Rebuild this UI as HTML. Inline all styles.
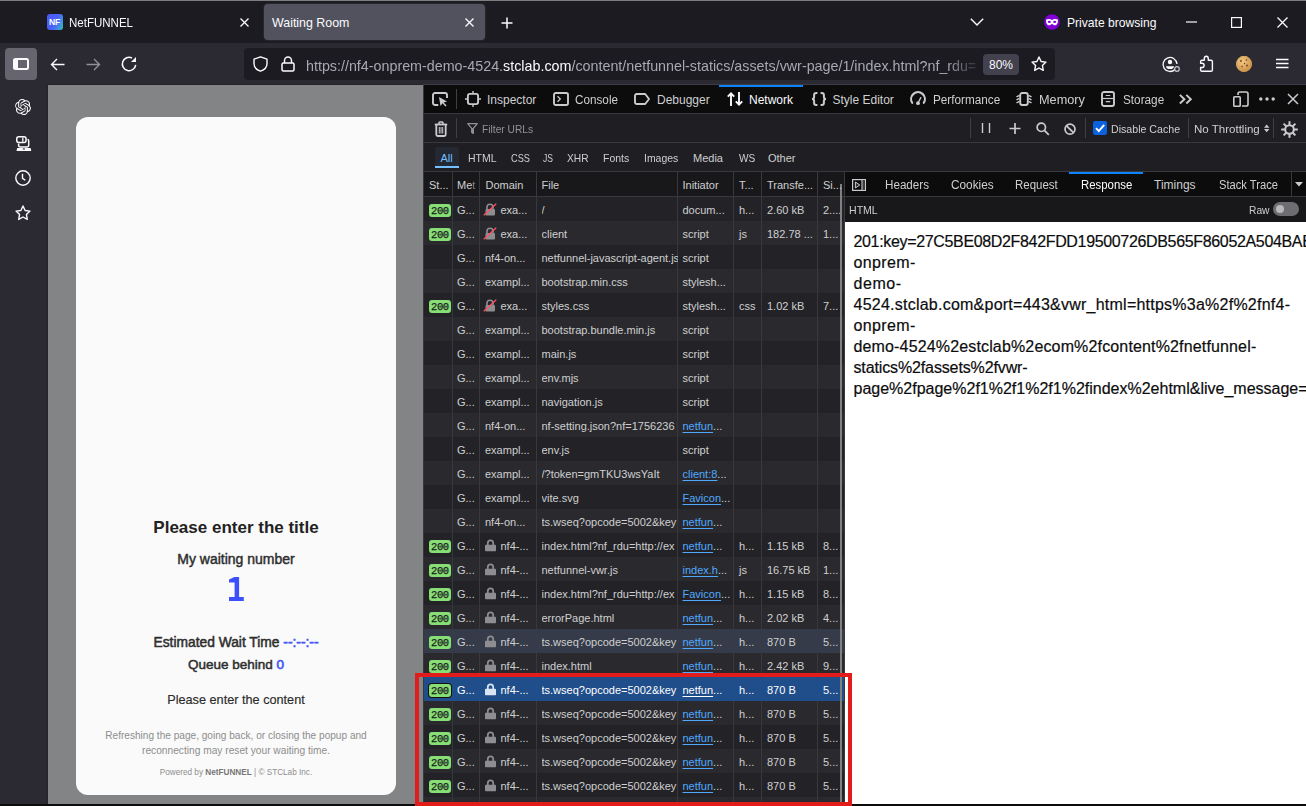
<!DOCTYPE html>
<html><head><meta charset="utf-8">
<style>
*{box-sizing:border-box;margin:0;padding:0}
html,body{width:1306px;height:806px;overflow:hidden;background:#1c1b22;font-family:"Liberation Sans",sans-serif;position:relative}
.a{position:absolute}
svg{position:absolute;overflow:visible}
.t{position:absolute;white-space:nowrap;line-height:1}
/* chrome */
#topline{left:0;top:0;width:1306px;height:1px;background:#7e7e82}
#tabstrip{left:0;top:1px;width:1306px;height:42px;background:#1c1b22}
#navbar{left:0;top:43px;width:1306px;height:41px;background:#2b2a33}
#navline{left:47px;top:84px;width:376px;height:1px;background:#24232a}
#navline2{left:423px;top:84px;width:883px;height:1px;background:#3d3c44}
#sbline{left:46px;top:85px;width:2px;height:721px;background:#27262d}
#sidebar{left:0;top:84px;width:48px;height:722px;background:#2b2a33}
#content{left:48px;top:85px;width:375px;height:719px;background:#838486}
#bottomstrip{left:0;top:804px;width:423px;height:2px;background:#0c0c0d}
#card{left:76px;top:117px;width:320px;height:678px;background:#fafafa;border-radius:12px}
.card-t{position:absolute;left:0;width:320px;text-align:center;white-space:nowrap;color:#2b2b2b}
/* devtools */
#dt{left:423px;top:85px;width:883px;height:721px;background:#232327}
#splitter{left:423px;top:85px;width:1px;height:721px;background:#38383d}
.dtt{position:absolute;white-space:nowrap;font-size:12px;line-height:1;color:#cfcfd1}
</style></head>
<body>
<div id="topline" class="a"></div>
<div id="tabstrip" class="a"></div>
<div id="navbar" class="a"></div>
<div id="navline" class="a"></div>
<div id="navline2" class="a"></div>
<div id="sidebar" class="a"></div>
<div id="content" class="a"></div>
<div id="sbline" class="a"></div>
<div id="bottomstrip" class="a"></div>

<!-- TAB STRIP -->
<div class="a" style="left:47px;top:14px;width:16px;height:16px;border-radius:3px;background:linear-gradient(115deg,#4b5af9 0%,#4b60f8 50%,#4090e6 78%,#2fd3a0 100%)"></div>
<div class="t" style="left:49px;top:17.7px;font-size:8.6px;font-weight:bold;color:#fff;letter-spacing:-0.1px">NF</div>
<div class="t" style="left:68.5px;top:16.8px;font-size:12px;color:#fbfbfe;transform:scaleX(0.96);transform-origin:0 0">NetFUNNEL</div>
<svg style="left:240px;top:18px" width="9" height="9"><path d="M0.5 0.5L8.5 8.5M8.5 0.5L0.5 8.5" stroke="#fbfbfe" stroke-width="1.3"/></svg>
<div class="a" style="left:264px;top:4px;width:221px;height:36px;border-radius:4px;background:#52525e;box-shadow:0 0 0 1px rgba(255,255,255,0.05)"></div>
<div class="t" style="left:272px;top:17px;font-size:12.4px;color:#fbfbfe">Waiting Room</div>
<svg style="left:465px;top:18px" width="9" height="9"><path d="M0.5 0.5L8.5 8.5M8.5 0.5L0.5 8.5" stroke="#fbfbfe" stroke-width="1.3"/></svg>
<svg style="left:501px;top:17px" width="12" height="12"><path d="M6 0.5V11.5M0.5 6H11.5" stroke="#fbfbfe" stroke-width="1.5"/></svg>
<svg style="left:970px;top:18px" width="14" height="8"><path d="M0.8 0.8L7 7L13.2 0.8" stroke="#fbfbfe" stroke-width="1.4" fill="none"/></svg>
<svg style="left:1044px;top:14px" width="16" height="16"><circle cx="8" cy="8" r="7.8" fill="#8000d7"/><path d="M2.1 5.5C4 4.6 6.5 4.7 8 5.9C9.5 4.7 12 4.6 13.9 5.5C14.1 8.6 13.2 11.3 11 11.3C9.7 11.3 8.7 10.4 8 9.7C7.3 10.4 6.3 11.3 5 11.3C2.8 11.3 1.9 8.6 2.1 5.5Z" fill="#fff"/><ellipse cx="5.3" cy="7.9" rx="1.5" ry="1.1" fill="#8000d7"/><ellipse cx="10.7" cy="7.9" rx="1.5" ry="1.1" fill="#8000d7"/></svg>
<div class="t" style="left:1067px;top:17px;font-size:12.1px;color:#fbfbfe">Private browsing</div>
<svg style="left:1186px;top:21px" width="11" height="2"><path d="M0 1H11" stroke="#fbfbfe" stroke-width="1.2"/></svg>
<svg style="left:1231px;top:17px" width="11" height="11"><rect x="0.6" y="0.6" width="9.8" height="9.8" stroke="#fbfbfe" stroke-width="1.2" fill="none"/></svg>
<svg style="left:1277px;top:17px" width="11" height="11"><path d="M0.5 0.5L10.5 10.5M10.5 0.5L0.5 10.5" stroke="#fbfbfe" stroke-width="1.3"/></svg>

<!-- NAV BAR -->
<div class="a" style="left:5px;top:48px;width:32px;height:32px;border-radius:4px;background:#65646f"></div>
<svg style="left:13px;top:58px" width="16" height="12"><rect x="1" y="1" width="14" height="10" rx="1.5" stroke="#fbfbfe" stroke-width="2" fill="none"/><rect x="1" y="1" width="4" height="10" fill="#fbfbfe"/></svg>
<svg style="left:50px;top:58px" width="15" height="13"><path d="M14.5 6.5H1.5M7 1L1.5 6.5L7 12" stroke="#fbfbfe" stroke-width="1.4" fill="none"/></svg>
<svg style="left:86px;top:58px" width="15" height="13"><path d="M0.5 6.5H13.5M8 1L13.5 6.5L8 12" stroke="#8f8f9d" stroke-width="1.4" fill="none"/></svg>
<svg style="left:121px;top:56px" width="16" height="16"><path d="M14.7 8.8A6.7 6.7 0 1 1 11 2" stroke="#fbfbfe" stroke-width="1.5" fill="none"/><path d="M10 5.9L15 0.9V5.9Z" fill="#fbfbfe"/></svg>
<div class="a" style="left:244px;top:48px;width:811px;height:32px;border-radius:4px;background:#1c1b22"></div>
<svg style="left:253px;top:56px" width="15" height="16"><path d="M7.5 0.8L1 3.2V7.5C1 11.2 3.8 14 7.5 15.2C11.2 14 14 11.2 14 7.5V3.2Z" stroke="#fbfbfe" stroke-width="1.4" fill="none" stroke-linejoin="round"/></svg>
<svg style="left:281px;top:56px" width="14" height="16"><path d="M3.5 7V4.5A3.5 3.5 0 0 1 10.5 4.5V7" stroke="#fbfbfe" stroke-width="1.5" fill="none"/><rect x="1" y="7" width="12" height="8" rx="1.5" stroke="#fbfbfe" stroke-width="1.5" fill="none"/></svg>
<div class="t" style="left:306px;top:58.9px;font-size:14.3px;color:#a8a8b0;width:675px;height:18px;overflow:hidden;-webkit-mask-image:linear-gradient(90deg,#000 0,#000 640px,transparent 675px)">https://nf4-onprem-demo-4524.<span style="color:#fbfbfe">stclab.com</span>/content/netfunnel-statics/assets/vwr-page/1/index.html?nf_rdu=</div>
<div class="a" style="left:983px;top:54px;width:36px;height:21px;border-radius:4px;background:#42414d"></div>
<div class="t" style="left:983px;top:59px;width:36px;text-align:center;font-size:12px;color:#fbfbfe">80%</div>
<svg style="left:1031px;top:56px" width="16" height="16"><path d="M8 1L10.1 5.5L15 6.1L11.4 9.4L12.3 14.4L8 12L3.7 14.4L4.6 9.4L1 6.1L5.9 5.5Z" stroke="#fbfbfe" stroke-width="1.4" fill="none" stroke-linejoin="round"/></svg>
<svg style="left:1162px;top:56px" width="18" height="16"><path d="M13.2 13.2A7 7 0 1 1 15 8" stroke="#fbfbfe" stroke-width="1.3" fill="none"/><circle cx="8" cy="6" r="2.2" fill="#fbfbfe"/><path d="M4 10.2H12C12 12.2 10 13 8 13C6 13 4 12.2 4 10.2Z" fill="#fbfbfe"/><circle cx="15" cy="13" r="2.3" stroke="#c8c8cc" stroke-width="1.2" fill="#2b2a33"/></svg>
<svg style="left:1199px;top:55px" width="16" height="18"><path d="M3 5.3H5.3V4C5.3 2.2 6.1 1.3 7.3 1.3C8.5 1.3 9.3 2.2 9.3 4V5.3H12C12.8 5.3 13.4 5.9 13.4 6.7V14.9C13.4 15.7 12.8 16.3 12 16.3H3C2.2 16.3 1.6 15.7 1.6 14.9V12.5H2.9C4.3 12.5 5.1 11.6 5.1 10.4C5.1 9.2 4.3 8.3 2.9 8.3H1.6V6.7C1.6 5.9 2.2 5.3 3 5.3Z" stroke="#fbfbfe" stroke-width="1.4" fill="none" stroke-linejoin="round"/></svg>
<svg style="left:1236px;top:56px" width="16" height="16"><circle cx="8" cy="8" r="7.9" fill="#e0ac62"/><circle cx="8" cy="8" r="7.9" fill="url(#ck)"/><defs><radialGradient id="ck" cx="0.4" cy="0.35" r="0.7"><stop offset="0" stop-color="#f0c987"/><stop offset="1" stop-color="#c98d3f"/></radialGradient></defs><circle cx="5" cy="5" r="0.9" fill="#7a3b1e"/><circle cx="10.5" cy="4" r="0.8" fill="#7a3b1e"/><circle cx="11" cy="9.5" r="0.9" fill="#7a3b1e"/><circle cx="6" cy="10.5" r="0.8" fill="#7a3b1e"/><circle cx="8.5" cy="7.5" r="0.7" fill="#7a3b1e"/></svg>
<svg style="left:1276px;top:58px" width="13" height="11"><path d="M0 1.5H12.5M0 5.5H12.5M0 9.5H12.5" stroke="#fbfbfe" stroke-width="1.4"/></svg>

<!-- SIDEBAR ICONS -->
<svg style="left:15px;top:99px" width="16" height="16" viewBox="0 0 24 24"><path d="M22.28 9.82a5.98 5.98 0 0 0-.52-4.91 6.05 6.05 0 0 0-6.51-2.9A6.07 6.07 0 0 0 4.98 4.18a5.98 5.98 0 0 0-4 2.9 6.05 6.05 0 0 0 .74 7.1 5.98 5.98 0 0 0 .51 4.91 6.05 6.05 0 0 0 6.52 2.9A5.98 5.98 0 0 0 13.26 24a6.06 6.06 0 0 0 5.77-4.21 5.99 5.99 0 0 0 4-2.9 6.06 6.06 0 0 0-.75-7.07zM13.26 22.43a4.48 4.48 0 0 1-2.88-1.04l.14-.08 4.78-2.76a.8.8 0 0 0 .39-.68v-6.74l2.02 1.17a.07.07 0 0 1 .04.05v5.58a4.5 4.5 0 0 1-4.49 4.5zM3.6 18.3a4.47 4.47 0 0 1-.53-3.01l.14.09 4.78 2.76a.77.77 0 0 0 .78 0l5.84-3.37v2.33a.08.08 0 0 1-.03.06L9.74 19.95a4.5 4.5 0 0 1-6.14-1.65zM2.34 7.9a4.49 4.49 0 0 1 2.37-1.97V11.6a.77.77 0 0 0 .39.68l5.81 3.35-2.02 1.17a.08.08 0 0 1-.07 0l-4.83-2.79A4.5 4.5 0 0 1 2.34 7.87zm16.6 3.86L13.1 8.36 15.12 7.2a.08.08 0 0 1 .07 0l4.83 2.79a4.49 4.49 0 0 1-.68 8.1v-5.68a.79.79 0 0 0-.41-.67zm2.01-3.02l-.14-.09-4.77-2.78a.78.78 0 0 0-.79 0L9.41 9.23V6.9a.07.07 0 0 1 .03-.06l4.83-2.79a4.5 4.5 0 0 1 6.68 4.66zM8.31 12.86l-2.02-1.16a.08.08 0 0 1-.04-.06V6.08a4.5 4.5 0 0 1 7.38-3.45l-.14.08L8.7 5.47a.8.8 0 0 0-.39.68zm1.1-2.37l2.6-1.5 2.61 1.5v3l-2.6 1.5-2.61-1.5z" fill="#fbfbfe"/></svg>
<svg style="left:16px;top:136px" width="16" height="16"><rect x="0.75" y="0.75" width="9.3" height="5.8" rx="2" stroke="#fbfbfe" stroke-width="1.5" fill="none"/><path d="M6.8 1.5V5.8" stroke="#fbfbfe" stroke-width="1.3"/><path d="M2.6 7.6V9.2C2.6 10.3 3.3 10.9 4.4 10.9H11C12.1 10.9 12.7 10.3 12.7 9.2V4.8C12.7 3.9 12.2 3.4 11.5 3.4" stroke="#fbfbfe" stroke-width="1.5" fill="none"/><path d="M1.2 12.1H14.6L15.2 14.2C15.3 14.7 15 15.1 14.5 15.1H1.3C0.8 15.1 0.5 14.7 0.6 14.2Z" fill="#fbfbfe"/><ellipse cx="7.9" cy="12.9" rx="1.3" ry="0.6" fill="#2b2a33"/></svg>
<svg style="left:15px;top:170px" width="16" height="16"><circle cx="8" cy="8" r="7.2" stroke="#fbfbfe" stroke-width="1.4" fill="none"/><path d="M7.5 3.8V8.3L10.3 10.3" stroke="#fbfbfe" stroke-width="1.4" fill="none"/></svg>
<svg style="left:15px;top:205px" width="16" height="16"><path d="M8 1L10.1 5.5L15 6.1L11.4 9.4L12.3 14.4L8 12L3.7 14.4L4.6 9.4L1 6.1L5.9 5.5Z" stroke="#fbfbfe" stroke-width="1.4" fill="none" stroke-linejoin="round"/></svg>

<div id="card" class="a">
<div class="card-t" style="top:402.3px;font-size:17px;font-weight:bold;line-height:1;color:#222">Please enter the title</div>
<div class="card-t" style="top:435px;font-size:14px;line-height:1;color:#2e2e2e;-webkit-text-stroke:0.45px #2e2e2e">My waiting number</div>
<svg style="left:152px;top:459px" width="17" height="26"><path d="M1 3.5L6.4 0.9H11.1V20.9H15.8V24.9H1V20.9H6.6V6.4H1Z" fill="#3c50fb"/></svg>
<div class="card-t" style="top:519px;font-size:13.8px;line-height:1;color:#2e2e2e;-webkit-text-stroke:0.5px #2e2e2e">Estimated Wait Time <span style="color:#4255f5;-webkit-text-stroke:0.6px #4255f5">--:--:--</span></div>
<div class="card-t" style="top:541px;font-size:13.5px;line-height:1;color:#2e2e2e;-webkit-text-stroke:0.5px #2e2e2e">Queue behind <span style="color:#4255f5;-webkit-text-stroke:0.6px #4255f5">0</span></div>
<div class="card-t" style="top:577px;font-size:12.7px;line-height:1;color:#2b2b2b;-webkit-text-stroke:0.15px #2b2b2b">Please enter the content</div>
<div class="card-t" style="top:613.6px;font-size:10.1px;line-height:1;color:#8d8d8d">Refreshing the page, going back, or closing the popup and</div>
<div class="card-t" style="top:628.6px;font-size:10.2px;line-height:1;color:#8d8d8d">reconnecting may reset your waiting time.</div>
<div class="card-t" style="top:651.5px;font-size:8.2px;line-height:1;color:#8d8d8d">Powered by <b style="color:#777">NetFUNNEL</b> | © STCLab Inc.</div>
</div>
<div id="dt" class="a"></div>
<div id="splitter" class="a"></div>
<div class="a" style="left:424px;top:85px;width:882px;height:28px;background:#0c0c0d;"></div>
<div class="a" style="left:424px;top:113px;width:882px;height:1px;background:#38383d;"></div>
<div class="a" style="left:424px;top:114px;width:882px;height:28px;background:#1f1f23;"></div>
<div class="a" style="left:424px;top:142px;width:882px;height:1px;background:#38383d;"></div>
<div class="a" style="left:424px;top:143px;width:882px;height:28px;background:#1f1f23;"></div>
<div class="a" style="left:424px;top:171px;width:882px;height:1px;background:#38383d;"></div>
<div class="a" style="left:424px;top:172px;width:420px;height:24px;background:#18181a;"></div>
<div class="a" style="left:424px;top:196px;width:420px;height:1px;background:#38383d;"></div>
<div class="a" style="left:424px;top:197px;width:420px;height:24px;background:#232327;"></div>
<div class="a" style="left:424px;top:221px;width:420px;height:24px;background:#2a2a2e;"></div>
<div class="a" style="left:424px;top:245px;width:420px;height:24px;background:#232327;"></div>
<div class="a" style="left:424px;top:269px;width:420px;height:24px;background:#2a2a2e;"></div>
<div class="a" style="left:424px;top:293px;width:420px;height:24px;background:#232327;"></div>
<div class="a" style="left:424px;top:317px;width:420px;height:24px;background:#2a2a2e;"></div>
<div class="a" style="left:424px;top:341px;width:420px;height:24px;background:#232327;"></div>
<div class="a" style="left:424px;top:365px;width:420px;height:24px;background:#2a2a2e;"></div>
<div class="a" style="left:424px;top:389px;width:420px;height:24px;background:#232327;"></div>
<div class="a" style="left:424px;top:413px;width:420px;height:24px;background:#2a2a2e;"></div>
<div class="a" style="left:424px;top:437px;width:420px;height:24px;background:#232327;"></div>
<div class="a" style="left:424px;top:461px;width:420px;height:24px;background:#2a2a2e;"></div>
<div class="a" style="left:424px;top:485px;width:420px;height:24px;background:#232327;"></div>
<div class="a" style="left:424px;top:509px;width:420px;height:24px;background:#2a2a2e;"></div>
<div class="a" style="left:424px;top:533px;width:420px;height:24px;background:#232327;"></div>
<div class="a" style="left:424px;top:557px;width:420px;height:24px;background:#2a2a2e;"></div>
<div class="a" style="left:424px;top:581px;width:420px;height:24px;background:#232327;"></div>
<div class="a" style="left:424px;top:605px;width:420px;height:24px;background:#2a2a2e;"></div>
<div class="a" style="left:424px;top:653px;width:420px;height:24px;background:#2a2a2e;"></div>
<div class="a" style="left:424px;top:701px;width:420px;height:24px;background:#2a2a2e;"></div>
<div class="a" style="left:424px;top:725px;width:420px;height:24px;background:#232327;"></div>
<div class="a" style="left:424px;top:749px;width:420px;height:24px;background:#2a2a2e;"></div>
<div class="a" style="left:424px;top:773px;width:420px;height:24px;background:#232327;"></div>
<div class="a" style="left:424px;top:797px;width:420px;height:9px;background:#2a2a2e;"></div>
<div class="a" style="left:452px;top:172px;width:1px;height:634px;background:#38383d;"></div>
<div class="a" style="left:479px;top:172px;width:1px;height:634px;background:#38383d;"></div>
<div class="a" style="left:536px;top:172px;width:1px;height:634px;background:#38383d;"></div>
<div class="a" style="left:677px;top:172px;width:1px;height:634px;background:#38383d;"></div>
<div class="a" style="left:733px;top:172px;width:1px;height:634px;background:#38383d;"></div>
<div class="a" style="left:761px;top:172px;width:1px;height:634px;background:#38383d;"></div>
<div class="a" style="left:817px;top:172px;width:1px;height:634px;background:#38383d;"></div>
<div class="a" style="left:424px;top:629px;width:420px;height:24px;background:#353b48;"></div>
<div class="a" style="left:424px;top:677px;width:420px;height:24px;background:#204e8a;"></div>
<div class="a" style="left:429px;top:204px;width:22px;height:13px;border-radius:3px;background:#86de74;"></div>
<div class="t" style="left:431px;top:205.61px;font-size:10.5px;color:#1a1a1d;font-family:'Liberation Mono',monospace;letter-spacing:-0.4px;-webkit-text-stroke:0.25px #1a1a1d">200</div>
<div class="t" style="left:457px;top:205.29px;font-size:11px;color:#cfcfd1;">G...</div>
<svg style="left:483px;top:203px" width="14" height="13"><path d="M4 6V4.3A3 3 0 0 1 10 4.3V6" stroke="#8e8e92" stroke-width="1.6" fill="none"/><rect x="2.5" y="6" width="9.5" height="6.5" rx="1" fill="#8e8e92"/><path d="M0.8 12.2L13.2 0.8" stroke="#ff4f5e" stroke-width="1.4"/></svg>
<div class="t" style="left:500.5px;top:205.29px;font-size:11px;color:#cfcfd1;">exa...</div>
<div class="t" style="left:541.5px;top:205.29px;font-size:11px;color:#cfcfd1;width:136px;overflow:hidden;height:14px;">/</div>
<div class="t" style="left:682.5px;top:205.29px;font-size:11px;color:#cfcfd1;">docum...</div>
<div class="t" style="left:739px;top:205.29px;font-size:11px;color:#cfcfd1;">h...</div>
<div class="t" style="left:767px;top:205.29px;font-size:11px;color:#cfcfd1;">2.60 kB</div>
<div class="t" style="left:823px;top:205.29px;font-size:11px;color:#cfcfd1;">2....</div>
<div class="a" style="left:429px;top:228px;width:22px;height:13px;border-radius:3px;background:#86de74;"></div>
<div class="t" style="left:431px;top:229.61px;font-size:10.5px;color:#1a1a1d;font-family:'Liberation Mono',monospace;letter-spacing:-0.4px;-webkit-text-stroke:0.25px #1a1a1d">200</div>
<div class="t" style="left:457px;top:229.29px;font-size:11px;color:#cfcfd1;">G...</div>
<svg style="left:483px;top:227px" width="14" height="13"><path d="M4 6V4.3A3 3 0 0 1 10 4.3V6" stroke="#8e8e92" stroke-width="1.6" fill="none"/><rect x="2.5" y="6" width="9.5" height="6.5" rx="1" fill="#8e8e92"/><path d="M0.8 12.2L13.2 0.8" stroke="#ff4f5e" stroke-width="1.4"/></svg>
<div class="t" style="left:500.5px;top:229.29px;font-size:11px;color:#cfcfd1;">exa...</div>
<div class="t" style="left:541.5px;top:229.29px;font-size:11px;color:#cfcfd1;width:136px;overflow:hidden;height:14px;">client</div>
<div class="t" style="left:682.5px;top:229.29px;font-size:11px;color:#cfcfd1;">script</div>
<div class="t" style="left:739px;top:229.29px;font-size:11px;color:#cfcfd1;">js</div>
<div class="t" style="left:767px;top:229.29px;font-size:11px;color:#cfcfd1;">182.78 ...</div>
<div class="t" style="left:823px;top:229.29px;font-size:11px;color:#cfcfd1;">1...</div>
<div class="t" style="left:457px;top:253.29px;font-size:11px;color:#cfcfd1;">G...</div>
<div class="t" style="left:485px;top:253.29px;font-size:11px;color:#cfcfd1;">nf4-on...</div>
<div class="t" style="left:541.5px;top:253.29px;font-size:11px;color:#cfcfd1;width:136px;overflow:hidden;height:14px;">netfunnel-javascript-agent.js</div>
<div class="t" style="left:682.5px;top:253.29px;font-size:11px;color:#cfcfd1;">script</div>
<div class="t" style="left:457px;top:277.29px;font-size:11px;color:#cfcfd1;">G...</div>
<div class="t" style="left:485px;top:277.29px;font-size:11px;color:#cfcfd1;">exampl...</div>
<div class="t" style="left:541.5px;top:277.29px;font-size:11px;color:#cfcfd1;width:136px;overflow:hidden;height:14px;">bootstrap.min.css</div>
<div class="t" style="left:682.5px;top:277.29px;font-size:11px;color:#cfcfd1;">stylesh...</div>
<div class="a" style="left:429px;top:300px;width:22px;height:13px;border-radius:3px;background:#86de74;"></div>
<div class="t" style="left:431px;top:301.61px;font-size:10.5px;color:#1a1a1d;font-family:'Liberation Mono',monospace;letter-spacing:-0.4px;-webkit-text-stroke:0.25px #1a1a1d">200</div>
<div class="t" style="left:457px;top:301.29px;font-size:11px;color:#cfcfd1;">G...</div>
<svg style="left:483px;top:299px" width="14" height="13"><path d="M4 6V4.3A3 3 0 0 1 10 4.3V6" stroke="#8e8e92" stroke-width="1.6" fill="none"/><rect x="2.5" y="6" width="9.5" height="6.5" rx="1" fill="#8e8e92"/><path d="M0.8 12.2L13.2 0.8" stroke="#ff4f5e" stroke-width="1.4"/></svg>
<div class="t" style="left:500.5px;top:301.29px;font-size:11px;color:#cfcfd1;">exa...</div>
<div class="t" style="left:541.5px;top:301.29px;font-size:11px;color:#cfcfd1;width:136px;overflow:hidden;height:14px;">styles.css</div>
<div class="t" style="left:682.5px;top:301.29px;font-size:11px;color:#cfcfd1;">stylesh...</div>
<div class="t" style="left:739px;top:301.29px;font-size:11px;color:#cfcfd1;">css</div>
<div class="t" style="left:767px;top:301.29px;font-size:11px;color:#cfcfd1;">1.02 kB</div>
<div class="t" style="left:823px;top:301.29px;font-size:11px;color:#cfcfd1;">7...</div>
<div class="t" style="left:457px;top:325.29px;font-size:11px;color:#cfcfd1;">G...</div>
<div class="t" style="left:485px;top:325.29px;font-size:11px;color:#cfcfd1;">exampl...</div>
<div class="t" style="left:541.5px;top:325.29px;font-size:11px;color:#cfcfd1;width:136px;overflow:hidden;height:14px;">bootstrap.bundle.min.js</div>
<div class="t" style="left:682.5px;top:325.29px;font-size:11px;color:#cfcfd1;">script</div>
<div class="t" style="left:457px;top:349.29px;font-size:11px;color:#cfcfd1;">G...</div>
<div class="t" style="left:485px;top:349.29px;font-size:11px;color:#cfcfd1;">exampl...</div>
<div class="t" style="left:541.5px;top:349.29px;font-size:11px;color:#cfcfd1;width:136px;overflow:hidden;height:14px;">main.js</div>
<div class="t" style="left:682.5px;top:349.29px;font-size:11px;color:#cfcfd1;">script</div>
<div class="t" style="left:457px;top:373.29px;font-size:11px;color:#cfcfd1;">G...</div>
<div class="t" style="left:485px;top:373.29px;font-size:11px;color:#cfcfd1;">exampl...</div>
<div class="t" style="left:541.5px;top:373.29px;font-size:11px;color:#cfcfd1;width:136px;overflow:hidden;height:14px;">env.mjs</div>
<div class="t" style="left:682.5px;top:373.29px;font-size:11px;color:#cfcfd1;">script</div>
<div class="t" style="left:457px;top:397.29px;font-size:11px;color:#cfcfd1;">G...</div>
<div class="t" style="left:485px;top:397.29px;font-size:11px;color:#cfcfd1;">exampl...</div>
<div class="t" style="left:541.5px;top:397.29px;font-size:11px;color:#cfcfd1;width:136px;overflow:hidden;height:14px;">navigation.js</div>
<div class="t" style="left:682.5px;top:397.29px;font-size:11px;color:#cfcfd1;">script</div>
<div class="t" style="left:457px;top:421.29px;font-size:11px;color:#cfcfd1;">G...</div>
<div class="t" style="left:485px;top:421.29px;font-size:11px;color:#cfcfd1;">nf4-on...</div>
<div class="t" style="left:541.5px;top:421.29px;font-size:11px;color:#cfcfd1;width:136px;overflow:hidden;height:14px;">nf-setting.json?nf=1756236</div>
<div class="t" style="left:682.5px;top:421.29px;font-size:11px;color:#cfcfd1;"><span style="text-decoration:underline;text-underline-offset:1.5px;color:#4fa9ff">netfun</span>...</div>
<div class="t" style="left:457px;top:445.29px;font-size:11px;color:#cfcfd1;">G...</div>
<div class="t" style="left:485px;top:445.29px;font-size:11px;color:#cfcfd1;">exampl...</div>
<div class="t" style="left:541.5px;top:445.29px;font-size:11px;color:#cfcfd1;width:136px;overflow:hidden;height:14px;">env.js</div>
<div class="t" style="left:682.5px;top:445.29px;font-size:11px;color:#cfcfd1;">script</div>
<div class="t" style="left:457px;top:469.29px;font-size:11px;color:#cfcfd1;">G...</div>
<div class="t" style="left:485px;top:469.29px;font-size:11px;color:#cfcfd1;">exampl...</div>
<div class="t" style="left:541.5px;top:469.29px;font-size:11px;color:#cfcfd1;width:136px;overflow:hidden;height:14px;">/?token=gmTKU3wsYaIt</div>
<div class="t" style="left:682.5px;top:469.29px;font-size:11px;color:#cfcfd1;"><span style="text-decoration:underline;text-underline-offset:1.5px;color:#4fa9ff">client:8</span>...</div>
<div class="t" style="left:457px;top:493.29px;font-size:11px;color:#cfcfd1;">G...</div>
<div class="t" style="left:485px;top:493.29px;font-size:11px;color:#cfcfd1;">exampl...</div>
<div class="t" style="left:541.5px;top:493.29px;font-size:11px;color:#cfcfd1;width:136px;overflow:hidden;height:14px;">vite.svg</div>
<div class="t" style="left:682.5px;top:493.29px;font-size:11px;color:#cfcfd1;"><span style="text-decoration:underline;text-underline-offset:1.5px;color:#4fa9ff">Favicon</span>...</div>
<div class="t" style="left:457px;top:517.29px;font-size:11px;color:#cfcfd1;">G...</div>
<div class="t" style="left:485px;top:517.29px;font-size:11px;color:#cfcfd1;">nf4-on...</div>
<div class="t" style="left:541.5px;top:517.29px;font-size:11px;color:#cfcfd1;width:136px;overflow:hidden;height:14px;">ts.wseq?opcode=5002&amp;key</div>
<div class="t" style="left:682.5px;top:517.29px;font-size:11px;color:#cfcfd1;"><span style="text-decoration:underline;text-underline-offset:1.5px;color:#4fa9ff">netfun</span>...</div>
<div class="a" style="left:429px;top:540px;width:22px;height:13px;border-radius:3px;background:#86de74;"></div>
<div class="t" style="left:431px;top:541.61px;font-size:10.5px;color:#1a1a1d;font-family:'Liberation Mono',monospace;letter-spacing:-0.4px;-webkit-text-stroke:0.25px #1a1a1d">200</div>
<div class="t" style="left:457px;top:541.29px;font-size:11px;color:#cfcfd1;">G...</div>
<svg style="left:485px;top:539px" width="11" height="13"><path d="M2.8 6V4A2.7 2.7 0 0 1 8.2 4V6" stroke="#8e8e92" stroke-width="1.7" fill="none"/><rect x="0" y="5.8" width="11" height="6.4" rx="0.8" fill="#8e8e92"/></svg>
<div class="t" style="left:500.5px;top:541.29px;font-size:11px;color:#cfcfd1;">nf4-...</div>
<div class="t" style="left:541.5px;top:541.29px;font-size:11px;color:#cfcfd1;width:136px;overflow:hidden;height:14px;">index.html?nf_rdu=http://ex</div>
<div class="t" style="left:682.5px;top:541.29px;font-size:11px;color:#cfcfd1;"><span style="text-decoration:underline;text-underline-offset:1.5px;color:#4fa9ff">netfun</span>...</div>
<div class="t" style="left:739px;top:541.29px;font-size:11px;color:#cfcfd1;">h...</div>
<div class="t" style="left:767px;top:541.29px;font-size:11px;color:#cfcfd1;">1.15 kB</div>
<div class="t" style="left:823px;top:541.29px;font-size:11px;color:#cfcfd1;">8...</div>
<div class="a" style="left:429px;top:564px;width:22px;height:13px;border-radius:3px;background:#86de74;"></div>
<div class="t" style="left:431px;top:565.61px;font-size:10.5px;color:#1a1a1d;font-family:'Liberation Mono',monospace;letter-spacing:-0.4px;-webkit-text-stroke:0.25px #1a1a1d">200</div>
<div class="t" style="left:457px;top:565.29px;font-size:11px;color:#cfcfd1;">G...</div>
<svg style="left:485px;top:563px" width="11" height="13"><path d="M2.8 6V4A2.7 2.7 0 0 1 8.2 4V6" stroke="#8e8e92" stroke-width="1.7" fill="none"/><rect x="0" y="5.8" width="11" height="6.4" rx="0.8" fill="#8e8e92"/></svg>
<div class="t" style="left:500.5px;top:565.29px;font-size:11px;color:#cfcfd1;">nf4-...</div>
<div class="t" style="left:541.5px;top:565.29px;font-size:11px;color:#cfcfd1;width:136px;overflow:hidden;height:14px;">netfunnel-vwr.js</div>
<div class="t" style="left:682.5px;top:565.29px;font-size:11px;color:#cfcfd1;"><span style="text-decoration:underline;text-underline-offset:1.5px;color:#4fa9ff">index.h</span>...</div>
<div class="t" style="left:739px;top:565.29px;font-size:11px;color:#cfcfd1;">js</div>
<div class="t" style="left:767px;top:565.29px;font-size:11px;color:#cfcfd1;">16.75 kB</div>
<div class="t" style="left:823px;top:565.29px;font-size:11px;color:#cfcfd1;">1...</div>
<div class="a" style="left:429px;top:588px;width:22px;height:13px;border-radius:3px;background:#86de74;"></div>
<div class="t" style="left:431px;top:589.61px;font-size:10.5px;color:#1a1a1d;font-family:'Liberation Mono',monospace;letter-spacing:-0.4px;-webkit-text-stroke:0.25px #1a1a1d">200</div>
<div class="t" style="left:457px;top:589.29px;font-size:11px;color:#cfcfd1;">G...</div>
<svg style="left:485px;top:587px" width="11" height="13"><path d="M2.8 6V4A2.7 2.7 0 0 1 8.2 4V6" stroke="#8e8e92" stroke-width="1.7" fill="none"/><rect x="0" y="5.8" width="11" height="6.4" rx="0.8" fill="#8e8e92"/></svg>
<div class="t" style="left:500.5px;top:589.29px;font-size:11px;color:#cfcfd1;">nf4-...</div>
<div class="t" style="left:541.5px;top:589.29px;font-size:11px;color:#cfcfd1;width:136px;overflow:hidden;height:14px;">index.html?nf_rdu=http://ex</div>
<div class="t" style="left:682.5px;top:589.29px;font-size:11px;color:#cfcfd1;"><span style="text-decoration:underline;text-underline-offset:1.5px;color:#4fa9ff">Favicon</span>...</div>
<div class="t" style="left:739px;top:589.29px;font-size:11px;color:#cfcfd1;">h...</div>
<div class="t" style="left:767px;top:589.29px;font-size:11px;color:#cfcfd1;">1.15 kB</div>
<div class="t" style="left:823px;top:589.29px;font-size:11px;color:#cfcfd1;">8...</div>
<div class="a" style="left:429px;top:612px;width:22px;height:13px;border-radius:3px;background:#86de74;"></div>
<div class="t" style="left:431px;top:613.61px;font-size:10.5px;color:#1a1a1d;font-family:'Liberation Mono',monospace;letter-spacing:-0.4px;-webkit-text-stroke:0.25px #1a1a1d">200</div>
<div class="t" style="left:457px;top:613.29px;font-size:11px;color:#cfcfd1;">G...</div>
<svg style="left:485px;top:611px" width="11" height="13"><path d="M2.8 6V4A2.7 2.7 0 0 1 8.2 4V6" stroke="#8e8e92" stroke-width="1.7" fill="none"/><rect x="0" y="5.8" width="11" height="6.4" rx="0.8" fill="#8e8e92"/></svg>
<div class="t" style="left:500.5px;top:613.29px;font-size:11px;color:#cfcfd1;">nf4-...</div>
<div class="t" style="left:541.5px;top:613.29px;font-size:11px;color:#cfcfd1;width:136px;overflow:hidden;height:14px;">errorPage.html</div>
<div class="t" style="left:682.5px;top:613.29px;font-size:11px;color:#cfcfd1;"><span style="text-decoration:underline;text-underline-offset:1.5px;color:#4fa9ff">netfun</span>...</div>
<div class="t" style="left:739px;top:613.29px;font-size:11px;color:#cfcfd1;">h...</div>
<div class="t" style="left:767px;top:613.29px;font-size:11px;color:#cfcfd1;">2.02 kB</div>
<div class="t" style="left:823px;top:613.29px;font-size:11px;color:#cfcfd1;">4...</div>
<div class="a" style="left:429px;top:636px;width:22px;height:13px;border-radius:3px;background:#86de74;"></div>
<div class="t" style="left:431px;top:637.61px;font-size:10.5px;color:#1a1a1d;font-family:'Liberation Mono',monospace;letter-spacing:-0.4px;-webkit-text-stroke:0.25px #1a1a1d">200</div>
<div class="t" style="left:457px;top:637.29px;font-size:11px;color:#cfcfd1;">G...</div>
<svg style="left:485px;top:635px" width="11" height="13"><path d="M2.8 6V4A2.7 2.7 0 0 1 8.2 4V6" stroke="#8e8e92" stroke-width="1.7" fill="none"/><rect x="0" y="5.8" width="11" height="6.4" rx="0.8" fill="#8e8e92"/></svg>
<div class="t" style="left:500.5px;top:637.29px;font-size:11px;color:#cfcfd1;">nf4-...</div>
<div class="t" style="left:541.5px;top:637.29px;font-size:11px;color:#cfcfd1;width:136px;overflow:hidden;height:14px;">ts.wseq?opcode=5002&amp;key</div>
<div class="t" style="left:682.5px;top:637.29px;font-size:11px;color:#cfcfd1;"><span style="text-decoration:underline;text-underline-offset:1.5px;color:#4fa9ff">netfun</span>...</div>
<div class="t" style="left:739px;top:637.29px;font-size:11px;color:#cfcfd1;">h...</div>
<div class="t" style="left:767px;top:637.29px;font-size:11px;color:#cfcfd1;">870 B</div>
<div class="t" style="left:823px;top:637.29px;font-size:11px;color:#cfcfd1;">5...</div>
<div class="a" style="left:429px;top:660px;width:22px;height:13px;border-radius:3px;background:#86de74;"></div>
<div class="t" style="left:431px;top:661.61px;font-size:10.5px;color:#1a1a1d;font-family:'Liberation Mono',monospace;letter-spacing:-0.4px;-webkit-text-stroke:0.25px #1a1a1d">200</div>
<div class="t" style="left:457px;top:661.29px;font-size:11px;color:#cfcfd1;">G...</div>
<svg style="left:485px;top:659px" width="11" height="13"><path d="M2.8 6V4A2.7 2.7 0 0 1 8.2 4V6" stroke="#8e8e92" stroke-width="1.7" fill="none"/><rect x="0" y="5.8" width="11" height="6.4" rx="0.8" fill="#8e8e92"/></svg>
<div class="t" style="left:500.5px;top:661.29px;font-size:11px;color:#cfcfd1;">nf4-...</div>
<div class="t" style="left:541.5px;top:661.29px;font-size:11px;color:#cfcfd1;width:136px;overflow:hidden;height:14px;">index.html</div>
<div class="t" style="left:682.5px;top:661.29px;font-size:11px;color:#cfcfd1;"><span style="text-decoration:underline;text-underline-offset:1.5px;color:#4fa9ff">netfun</span>...</div>
<div class="t" style="left:739px;top:661.29px;font-size:11px;color:#cfcfd1;">h...</div>
<div class="t" style="left:767px;top:661.29px;font-size:11px;color:#cfcfd1;">2.42 kB</div>
<div class="t" style="left:823px;top:661.29px;font-size:11px;color:#cfcfd1;">9...</div>
<div class="a" style="left:429px;top:684px;width:22px;height:13px;border-radius:3px;background:#86de74;box-shadow:0 0 0 1px #111;"></div>
<div class="t" style="left:431px;top:685.61px;font-size:10.5px;color:#1a1a1d;font-family:'Liberation Mono',monospace;letter-spacing:-0.4px;-webkit-text-stroke:0.25px #1a1a1d">200</div>
<div class="t" style="left:457px;top:685.29px;font-size:11px;color:#ffffff;">G...</div>
<svg style="left:485px;top:683px" width="11" height="13"><path d="M2.8 6V4A2.7 2.7 0 0 1 8.2 4V6" stroke="#d8e3f3" stroke-width="1.7" fill="none"/><rect x="0" y="5.8" width="11" height="6.4" rx="0.8" fill="#d8e3f3"/></svg>
<div class="t" style="left:500.5px;top:685.29px;font-size:11px;color:#ffffff;">nf4-...</div>
<div class="t" style="left:541.5px;top:685.29px;font-size:11px;color:#ffffff;width:136px;overflow:hidden;height:14px;">ts.wseq?opcode=5002&amp;key</div>
<div class="t" style="left:682.5px;top:685.29px;font-size:11px;color:#ffffff;"><span style="text-decoration:underline;text-underline-offset:1.5px;color:#ffffff">netfun</span>...</div>
<div class="t" style="left:739px;top:685.29px;font-size:11px;color:#ffffff;">h...</div>
<div class="t" style="left:767px;top:685.29px;font-size:11px;color:#ffffff;">870 B</div>
<div class="t" style="left:823px;top:685.29px;font-size:11px;color:#ffffff;">5...</div>
<div class="a" style="left:429px;top:708px;width:22px;height:13px;border-radius:3px;background:#86de74;"></div>
<div class="t" style="left:431px;top:709.61px;font-size:10.5px;color:#1a1a1d;font-family:'Liberation Mono',monospace;letter-spacing:-0.4px;-webkit-text-stroke:0.25px #1a1a1d">200</div>
<div class="t" style="left:457px;top:709.29px;font-size:11px;color:#cfcfd1;">G...</div>
<svg style="left:485px;top:707px" width="11" height="13"><path d="M2.8 6V4A2.7 2.7 0 0 1 8.2 4V6" stroke="#8e8e92" stroke-width="1.7" fill="none"/><rect x="0" y="5.8" width="11" height="6.4" rx="0.8" fill="#8e8e92"/></svg>
<div class="t" style="left:500.5px;top:709.29px;font-size:11px;color:#cfcfd1;">nf4-...</div>
<div class="t" style="left:541.5px;top:709.29px;font-size:11px;color:#cfcfd1;width:136px;overflow:hidden;height:14px;">ts.wseq?opcode=5002&amp;key</div>
<div class="t" style="left:682.5px;top:709.29px;font-size:11px;color:#cfcfd1;"><span style="text-decoration:underline;text-underline-offset:1.5px;color:#4fa9ff">netfun</span>...</div>
<div class="t" style="left:739px;top:709.29px;font-size:11px;color:#cfcfd1;">h...</div>
<div class="t" style="left:767px;top:709.29px;font-size:11px;color:#cfcfd1;">870 B</div>
<div class="t" style="left:823px;top:709.29px;font-size:11px;color:#cfcfd1;">5...</div>
<div class="a" style="left:429px;top:732px;width:22px;height:13px;border-radius:3px;background:#86de74;"></div>
<div class="t" style="left:431px;top:733.61px;font-size:10.5px;color:#1a1a1d;font-family:'Liberation Mono',monospace;letter-spacing:-0.4px;-webkit-text-stroke:0.25px #1a1a1d">200</div>
<div class="t" style="left:457px;top:733.29px;font-size:11px;color:#cfcfd1;">G...</div>
<svg style="left:485px;top:731px" width="11" height="13"><path d="M2.8 6V4A2.7 2.7 0 0 1 8.2 4V6" stroke="#8e8e92" stroke-width="1.7" fill="none"/><rect x="0" y="5.8" width="11" height="6.4" rx="0.8" fill="#8e8e92"/></svg>
<div class="t" style="left:500.5px;top:733.29px;font-size:11px;color:#cfcfd1;">nf4-...</div>
<div class="t" style="left:541.5px;top:733.29px;font-size:11px;color:#cfcfd1;width:136px;overflow:hidden;height:14px;">ts.wseq?opcode=5002&amp;key</div>
<div class="t" style="left:682.5px;top:733.29px;font-size:11px;color:#cfcfd1;"><span style="text-decoration:underline;text-underline-offset:1.5px;color:#4fa9ff">netfun</span>...</div>
<div class="t" style="left:739px;top:733.29px;font-size:11px;color:#cfcfd1;">h...</div>
<div class="t" style="left:767px;top:733.29px;font-size:11px;color:#cfcfd1;">870 B</div>
<div class="t" style="left:823px;top:733.29px;font-size:11px;color:#cfcfd1;">5...</div>
<div class="a" style="left:429px;top:756px;width:22px;height:13px;border-radius:3px;background:#86de74;"></div>
<div class="t" style="left:431px;top:757.61px;font-size:10.5px;color:#1a1a1d;font-family:'Liberation Mono',monospace;letter-spacing:-0.4px;-webkit-text-stroke:0.25px #1a1a1d">200</div>
<div class="t" style="left:457px;top:757.29px;font-size:11px;color:#cfcfd1;">G...</div>
<svg style="left:485px;top:755px" width="11" height="13"><path d="M2.8 6V4A2.7 2.7 0 0 1 8.2 4V6" stroke="#8e8e92" stroke-width="1.7" fill="none"/><rect x="0" y="5.8" width="11" height="6.4" rx="0.8" fill="#8e8e92"/></svg>
<div class="t" style="left:500.5px;top:757.29px;font-size:11px;color:#cfcfd1;">nf4-...</div>
<div class="t" style="left:541.5px;top:757.29px;font-size:11px;color:#cfcfd1;width:136px;overflow:hidden;height:14px;">ts.wseq?opcode=5002&amp;key</div>
<div class="t" style="left:682.5px;top:757.29px;font-size:11px;color:#cfcfd1;"><span style="text-decoration:underline;text-underline-offset:1.5px;color:#4fa9ff">netfun</span>...</div>
<div class="t" style="left:739px;top:757.29px;font-size:11px;color:#cfcfd1;">h...</div>
<div class="t" style="left:767px;top:757.29px;font-size:11px;color:#cfcfd1;">870 B</div>
<div class="t" style="left:823px;top:757.29px;font-size:11px;color:#cfcfd1;">5...</div>
<div class="a" style="left:429px;top:780px;width:22px;height:13px;border-radius:3px;background:#86de74;"></div>
<div class="t" style="left:431px;top:781.61px;font-size:10.5px;color:#1a1a1d;font-family:'Liberation Mono',monospace;letter-spacing:-0.4px;-webkit-text-stroke:0.25px #1a1a1d">200</div>
<div class="t" style="left:457px;top:781.29px;font-size:11px;color:#cfcfd1;">G...</div>
<svg style="left:485px;top:779px" width="11" height="13"><path d="M2.8 6V4A2.7 2.7 0 0 1 8.2 4V6" stroke="#8e8e92" stroke-width="1.7" fill="none"/><rect x="0" y="5.8" width="11" height="6.4" rx="0.8" fill="#8e8e92"/></svg>
<div class="t" style="left:500.5px;top:781.29px;font-size:11px;color:#cfcfd1;">nf4-...</div>
<div class="t" style="left:541.5px;top:781.29px;font-size:11px;color:#cfcfd1;width:136px;overflow:hidden;height:14px;">ts.wseq?opcode=5002&amp;key</div>
<div class="t" style="left:682.5px;top:781.29px;font-size:11px;color:#cfcfd1;"><span style="text-decoration:underline;text-underline-offset:1.5px;color:#4fa9ff">netfun</span>...</div>
<div class="t" style="left:739px;top:781.29px;font-size:11px;color:#cfcfd1;">h...</div>
<div class="t" style="left:767px;top:781.29px;font-size:11px;color:#cfcfd1;">870 B</div>
<div class="t" style="left:823px;top:781.29px;font-size:11px;color:#cfcfd1;">5...</div>
<div class="a" style="left:840px;top:184px;width:2px;height:622px;background:#808080;"></div>
<div class="t" style="left:487px;top:93.84px;font-size:12px;color:#cfcfd1;">Inspector</div>
<div class="t" style="left:575px;top:93.84px;font-size:12px;color:#cfcfd1;;transform:scaleX(0.977);transform-origin:0 0">Console</div>
<div class="t" style="left:657px;top:93.84px;font-size:12px;color:#cfcfd1;">Debugger</div>
<div class="t" style="left:749px;top:93.84px;font-size:12px;color:#fbfbfe;">Network</div>
<div class="t" style="left:832.5px;top:93.84px;font-size:12px;color:#cfcfd1;">Style Editor</div>
<div class="t" style="left:932.5px;top:93.84px;font-size:12px;color:#cfcfd1;;transform:scaleX(0.978);transform-origin:0 0">Performance</div>
<div class="t" style="left:1039px;top:93.84px;font-size:12px;color:#cfcfd1;;transform:scaleX(1.06);transform-origin:0 0">Memory</div>
<div class="t" style="left:1122.5px;top:93.84px;font-size:12px;color:#cfcfd1;;transform:scaleX(0.98);transform-origin:0 0">Storage</div>
<div class="a" style="left:719px;top:85px;width:84px;height:2px;background:#0a84ff;"></div>
<div class="t" style="left:481.5px;top:123.69px;font-size:11px;color:#939395;;transform:scaleX(0.93);transform-origin:0 0">Filter URLs</div>
<div class="t" style="left:1110.5px;top:123.69px;font-size:11px;color:#cfcfd1;;transform:scaleX(0.965);transform-origin:0 0">Disable Cache</div>
<div class="t" style="left:1193.5px;top:123.69px;font-size:11px;color:#cfcfd1;;transform:scaleX(1.048);transform-origin:0 0">No Throttling</div>
<div class="a" style="left:435px;top:147px;width:24px;height:21px;background:#232833;border-radius:2px 2px 0 0"></div>
<div class="a" style="left:435px;top:166px;width:24px;height:2px;background:#75bfff;"></div>
<div class="t" style="left:440.5px;top:152.69px;font-size:11px;color:#75bfff;">All</div>
<div class="t" style="left:467.5px;top:152.69px;font-size:11px;color:#cfcfd1;;transform:scaleX(0.95);transform-origin:0 0">HTML</div>
<div class="t" style="left:510.5px;top:152.69px;font-size:11px;color:#cfcfd1;;transform:scaleX(0.84);transform-origin:0 0">CSS</div>
<div class="t" style="left:543px;top:152.69px;font-size:11px;color:#cfcfd1;;transform:scaleX(0.78);transform-origin:0 0">JS</div>
<div class="t" style="left:567px;top:152.69px;font-size:11px;color:#cfcfd1;;transform:scaleX(0.93);transform-origin:0 0">XHR</div>
<div class="t" style="left:603px;top:152.69px;font-size:11px;color:#cfcfd1;;transform:scaleX(0.95);transform-origin:0 0">Fonts</div>
<div class="t" style="left:643.5px;top:152.69px;font-size:11px;color:#cfcfd1;;transform:scaleX(0.95);transform-origin:0 0">Images</div>
<div class="t" style="left:693px;top:152.69px;font-size:11px;color:#cfcfd1;">Media</div>
<div class="t" style="left:738.5px;top:152.69px;font-size:11px;color:#cfcfd1;;transform:scaleX(0.92);transform-origin:0 0">WS</div>
<div class="t" style="left:768px;top:152.69px;font-size:11px;color:#cfcfd1;">Other</div>
<div class="t" style="left:429px;top:179.69px;font-size:11px;color:#cfcfd1;">St...</div>
<div class="t" style="left:457px;top:179.69px;font-size:11px;color:#cfcfd1;">Me<span style="opacity:.55">t</span></div>
<div class="t" style="left:485.5px;top:179.69px;font-size:11px;color:#cfcfd1;">Domain</div>
<div class="t" style="left:541.5px;top:179.69px;font-size:11px;color:#cfcfd1;">File</div>
<div class="t" style="left:682.5px;top:179.69px;font-size:11px;color:#cfcfd1;">Initiator</div>
<div class="t" style="left:739px;top:179.69px;font-size:11px;color:#cfcfd1;">T...</div>
<div class="t" style="left:767px;top:179.69px;font-size:11px;color:#cfcfd1;">Transfe...</div>
<div class="t" style="left:823px;top:179.69px;font-size:11px;color:#cfcfd1;">Si...</div>
<div class="a" style="left:844px;top:171px;width:1px;height:635px;background:#38383d;"></div>
<div class="a" style="left:845px;top:172px;width:461px;height:24px;background:#0c0c0d;"></div>
<div class="a" style="left:845px;top:196px;width:461px;height:1px;background:#38383d;"></div>
<div class="a" style="left:845px;top:197px;width:461px;height:25px;background:#18181a;"></div>
<div class="a" style="left:845px;top:222px;width:461px;height:584px;background:#ffffff;"></div>
<div class="a" style="left:1069px;top:172px;width:74px;height:2px;background:#0a84ff;"></div>
<div class="t" style="left:884.5px;top:178.84px;font-size:12px;color:#cfcfd1;;transform:scaleX(0.97);transform-origin:0 0">Headers</div>
<div class="t" style="left:950.5px;top:178.84px;font-size:12px;color:#cfcfd1;;transform:scaleX(0.985);transform-origin:0 0">Cookies</div>
<div class="t" style="left:1015px;top:178.84px;font-size:12px;color:#cfcfd1;;transform:scaleX(0.955);transform-origin:0 0">Request</div>
<div class="t" style="left:1080.5px;top:178.84px;font-size:12px;color:#fbfbfe;;transform:scaleX(0.95);transform-origin:0 0">Response</div>
<div class="t" style="left:1154px;top:178.84px;font-size:12px;color:#cfcfd1;">Timings</div>
<div class="t" style="left:1218.5px;top:178.84px;font-size:12px;color:#cfcfd1;;transform:scaleX(0.93);transform-origin:0 0">Stack Trace</div>
<div class="a" style="left:1291px;top:172px;width:1px;height:24px;background:#38383d;"></div>
<div class="t" style="left:849px;top:204.69px;font-size:11px;color:#cfcfd1;;transform:scaleX(0.96);transform-origin:0 0">HTML</div>
<div class="t" style="left:1248.5px;top:204.69px;font-size:11px;color:#cfcfd1;;transform:scaleX(0.93);transform-origin:0 0">Raw</div>
<div class="t" style="left:853.5px;top:234.46px;font-size:16px;color:#0c0c0d;letter-spacing:-0.34px;-webkit-text-stroke:0.2px #0c0c0d">201:key=27C5BE08D2F842FDD19500726DB565F86052A504BAE</div>
<div class="t" style="left:853.5px;top:255.46px;font-size:16px;color:#0c0c0d;letter-spacing:0.36px;-webkit-text-stroke:0.2px #0c0c0d">onprem-</div>
<div class="t" style="left:853.5px;top:276.46px;font-size:16px;color:#0c0c0d;letter-spacing:0.56px;-webkit-text-stroke:0.2px #0c0c0d">demo-</div>
<div class="t" style="left:853.5px;top:297.46px;font-size:16px;color:#0c0c0d;letter-spacing:0.24px;-webkit-text-stroke:0.2px #0c0c0d">4524.stclab.com&amp;port=443&amp;vwr_html=https%3a%2f%2fnf4-</div>
<div class="t" style="left:853.5px;top:318.46px;font-size:16px;color:#0c0c0d;letter-spacing:0.36px;-webkit-text-stroke:0.2px #0c0c0d">onprem-</div>
<div class="t" style="left:853.5px;top:339.46px;font-size:16px;color:#0c0c0d;letter-spacing:0.15px;-webkit-text-stroke:0.2px #0c0c0d">demo-4524%2estclab%2ecom%2fcontent%2fnetfunnel-</div>
<div class="t" style="left:853.5px;top:360.46px;font-size:16px;color:#0c0c0d;letter-spacing:-0.13px;-webkit-text-stroke:0.2px #0c0c0d">statics%2fassets%2fvwr-</div>
<div class="t" style="left:853.5px;top:381.46px;font-size:16px;color:#0c0c0d;letter-spacing:0px;-webkit-text-stroke:0.2px #0c0c0d">page%2fpage%2f1%2f1%2f1%2findex%2ehtml&amp;live_message=</div>
<div class="a" style="left:424px;top:804px;width:882px;height:2px;background:#0c0c0d;"></div>
<div class="a" style="left:415px;top:673px;width:437px;height:133px;border:4px solid #e21b1b"></div>
<svg style="left:432px;top:92px" width="16" height="14"><path d="M6.3 13H3C1.9 13 1 12.1 1 11V3C1 1.9 1.9 1 3 1H13C14.1 1 15 1.9 15 3V6" stroke="#cbcbcf" stroke-width="1.9" fill="none"/><path d="M7 5L15 9.5L11.6 10.5L14.6 13.6L13.4 14.4L10.5 11.3L8.5 14Z" fill="#cbcbcf"/></svg>
<div class="a" style="left:456px;top:89px;width:1px;height:20px;background:#3f3f44"></div>
<svg style="left:465px;top:91px" width="16" height="16"><rect x="2.9" y="2.9" width="10.2" height="10.2" rx="2" stroke="#cbcbcf" stroke-width="1.9" fill="none"/><path d="M8 0V2.5M8 13.5V16M0 8H2.5M13.5 8H16" stroke="#cbcbcf" stroke-width="1.4"/></svg>
<svg style="left:553px;top:92px" width="16" height="14"><rect x="1" y="1" width="14" height="12" rx="1.8" stroke="#cbcbcf" stroke-width="1.9" fill="none"/><path d="M4.5 4.3L7.3 7L4.5 9.7" stroke="#cbcbcf" stroke-width="1.3" fill="none"/></svg>
<svg style="left:634px;top:93px" width="16" height="12"><path d="M2.8 1H11.2L15 6L11.2 11H2.8C1.8 11 1 10.2 1 9.2V2.8C1 1.8 1.8 1 2.8 1Z" stroke="#cbcbcf" stroke-width="1.9" fill="none" stroke-linejoin="round"/></svg>
<svg style="left:727px;top:92px" width="17" height="14"><path d="M4 14V1.3M0.8 4.6L4 1.3L7.2 4.6" stroke="#fbfbfe" stroke-width="1.9" fill="none"/><path d="M12 0V12.7M8.8 9.4L12 12.7L15.2 9.4" stroke="#fbfbfe" stroke-width="1.9" fill="none"/></svg>
<svg style="left:811px;top:92px" width="16" height="14"><path d="M6.4 1H5.2C3.8 1 3.1 1.8 3.1 3V5C3.1 6.1 2.4 7 1 7C2.4 7 3.1 7.9 3.1 9V11C3.1 12.2 3.8 13 5.2 13H6.4M9.6 1H10.8C12.2 1 12.9 1.8 12.9 3V5C12.9 6.1 13.6 7 15 7C13.6 7 12.9 7.9 12.9 9V11C12.9 12.2 12.2 13 10.8 13H9.6" stroke="#cbcbcf" stroke-width="2" fill="none"/></svg>
<svg style="left:910px;top:91px" width="16" height="15"><path d="M2.2 11.8A6.9 6.9 0 1 1 13.8 11.8" stroke="#cbcbcf" stroke-width="2.1" fill="none" stroke-linecap="round"/><path d="M8 12L10.8 6.6" stroke="#cbcbcf" stroke-width="1.3" stroke-linecap="round"/><circle cx="8" cy="12.2" r="1.9" fill="#cbcbcf"/></svg>
<svg style="left:1016px;top:92px" width="16" height="14"><rect x="4.2" y="1" width="7.6" height="12" rx="2" stroke="#cbcbcf" stroke-width="1.9" fill="none"/><path d="M1 4.6L3 3.7M1 7.6L3 6.7M1 10.6L3 9.7M15 4.6L13 3.7M15 7.6L13 6.7M15 10.6L13 9.7" stroke="#cbcbcf" stroke-width="1.4" stroke-linecap="round"/></svg>
<svg style="left:1101px;top:91px" width="14" height="16"><rect x="1" y="1" width="12" height="14" rx="2" stroke="#cbcbcf" stroke-width="1.9" fill="none"/><path d="M1.5 7.5H12.5" stroke="#cbcbcf" stroke-width="1.2"/><path d="M5.2 4.5H8.8M5.2 10.6H8.8" stroke="#cbcbcf" stroke-width="1.2" stroke-linecap="round"/></svg>
<svg style="left:1179px;top:94px" width="14" height="11"><path d="M0.9 0.9L5.4 5.2L0.9 9.5M7.3 0.9L11.8 5.2L7.3 9.5" stroke="#cbcbcf" stroke-width="2" fill="none"/></svg>
<svg style="left:1233px;top:91px" width="16" height="16"><path d="M5 4V2.8C5 1.8 5.8 1 6.8 1H13.2C14.2 1 15 1.8 15 2.8V13.2C15 14.2 14.2 15 13.2 15H9" stroke="#cbcbcf" stroke-width="1.6" fill="none"/><rect x="0.8" y="5.8" width="6.4" height="9.4" rx="0.8" stroke="#cbcbcf" stroke-width="1.6" fill="none"/></svg>
<svg style="left:1259px;top:97px" width="16" height="4"><circle cx="1.8" cy="2" r="1.7" fill="#cbcbcf"/><circle cx="8" cy="2" r="1.7" fill="#cbcbcf"/><circle cx="14.2" cy="2" r="1.7" fill="#cbcbcf"/></svg>
<svg style="left:1287px;top:93px" width="12" height="12"><path d="M1 1L11 11M11 1L1 11" stroke="#cbcbcf" stroke-width="1.5"/></svg>
<svg style="left:434px;top:121px" width="14" height="16"><path d="M0.8 3.5H13.2" stroke="#cbcbcf" stroke-width="1.8"/><path d="M5 3V1.8C5 1.3 5.4 1 5.8 1H8.2C8.6 1 9 1.3 9 1.8V3" stroke="#cbcbcf" stroke-width="1.5" fill="none"/><path d="M2.3 3.8V13.6C2.3 14.4 2.9 15 3.7 15H10.3C11.1 15 11.7 14.4 11.7 13.6V3.8" stroke="#cbcbcf" stroke-width="1.8" fill="none"/><path d="M5.3 6V12.5M7 6V12.5M8.7 6V12.5" stroke="#cbcbcf" stroke-width="1"/></svg>
<div class="a" style="left:456px;top:118px;width:1px;height:20px;background:#3f3f44"></div>
<svg style="left:467px;top:123px" width="11" height="11"><path d="M0.7 0.7H10.3L6.3 5.3V10.5L4.7 9.5V5.3Z" stroke="#939395" stroke-width="1.2" fill="none" stroke-linejoin="round"/><path d="M4.7 5.3H6.3V10.5L4.7 9.5Z" fill="#939395"/></svg>
<div class="a" style="left:970px;top:118px;width:1px;height:20px;background:#3f3f44"></div>
<div class="a" style="left:1085px;top:118px;width:1px;height:20px;background:#3f3f44"></div>
<div class="a" style="left:1188px;top:118px;width:1px;height:20px;background:#3f3f44"></div>
<div class="a" style="left:1273px;top:118px;width:1px;height:20px;background:#3f3f44"></div>
<svg style="left:981px;top:123px" width="10" height="10"><path d="M1.5 0V10M8.5 0V10" stroke="#cbcbcf" stroke-width="1.4"/></svg>
<svg style="left:1009px;top:123px" width="12" height="12"><path d="M6 0V11M0.5 5.5H11.5" stroke="#cbcbcf" stroke-width="1.7"/></svg>
<svg style="left:1036px;top:122px" width="14" height="14"><circle cx="5.3" cy="5.3" r="4.2" stroke="#cbcbcf" stroke-width="1.7" fill="none"/><path d="M8.4 8.4L12.8 12.8" stroke="#cbcbcf" stroke-width="1.8"/></svg>
<svg style="left:1064px;top:123px" width="13" height="13"><circle cx="6" cy="6.2" r="5" stroke="#cbcbcf" stroke-width="1.7" fill="none"/><path d="M2.6 2.8L9.4 9.6" stroke="#cbcbcf" stroke-width="1.7"/></svg>
<svg style="left:1093px;top:121px" width="14" height="14"><rect x="0" y="0" width="14" height="14" rx="2.2" fill="#0b62de"/><path d="M3 7.2L5.8 10L11.2 3.8" stroke="#fff" stroke-width="1.9" fill="none"/></svg>
<svg style="left:1264px;top:124px" width="6" height="9"><path d="M0 3.8L2.7 0.5L5.4 3.8Z M0 5L2.7 8.3L5.4 5Z" fill="#cbcbcf"/></svg>
<svg style="left:1281px;top:121px" width="17" height="17"><g transform="translate(8.5 8.5)"><rect x="-1" y="-8.3" width="2" height="4" fill="#cbcbcf" transform="rotate(0)"/><rect x="-1" y="-8.3" width="2" height="4" fill="#cbcbcf" transform="rotate(45)"/><rect x="-1" y="-8.3" width="2" height="4" fill="#cbcbcf" transform="rotate(90)"/><rect x="-1" y="-8.3" width="2" height="4" fill="#cbcbcf" transform="rotate(135)"/><rect x="-1" y="-8.3" width="2" height="4" fill="#cbcbcf" transform="rotate(180)"/><rect x="-1" y="-8.3" width="2" height="4" fill="#cbcbcf" transform="rotate(225)"/><rect x="-1" y="-8.3" width="2" height="4" fill="#cbcbcf" transform="rotate(270)"/><rect x="-1" y="-8.3" width="2" height="4" fill="#cbcbcf" transform="rotate(315)"/><circle r="4.3" stroke="#cbcbcf" stroke-width="2" fill="none"/></g></svg>
<svg style="left:852px;top:179px" width="14" height="12"><rect x="0.6" y="0.6" width="12.8" height="10.8" stroke="#cbcbcf" stroke-width="1.2" fill="none"/><rect x="10.4" y="1.2" width="2.4" height="9.6" fill="#3c3c40"/><path d="M10 0.6V11.4" stroke="#cbcbcf" stroke-width="1.1"/><path d="M3.4 3L7.8 6L3.4 9Z" stroke="#cbcbcf" stroke-width="1" fill="#333" stroke-linejoin="round"/></svg>
<svg style="left:1295px;top:182px" width="8" height="5"><path d="M0 0H8L4 4.5Z" fill="#cbcbcf"/></svg>
<div class="a" style="left:1273px;top:202px;width:26px;height:14px;border-radius:7px;background:#6e6e72"></div>
<div class="a" style="left:1276px;top:205px;width:8px;height:8px;border-radius:4px;background:#b9b9bc"></div>


</body></html>
